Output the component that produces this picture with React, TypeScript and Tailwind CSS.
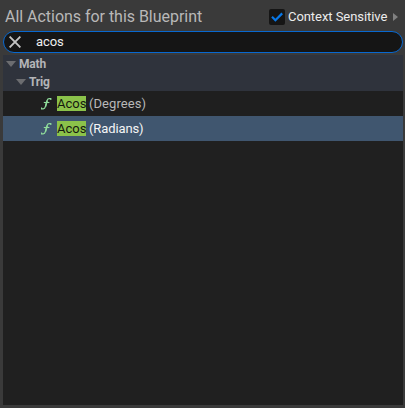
import React from "react";

function Caret() {
  return (
    <svg width="10" height="6" viewBox="0 0 10 6" className="shrink-0">
      <path d="M0 0H10L5 6Z" fill="#6c6d70" />
    </svg>
  );
}

function FunctionIcon() {
  return (
    <svg width="11" height="13" viewBox="0 0 11 13" fill="none" stroke="#8fdc9b" className="shrink-0">
      <path d="M9.8 2.9V1.6H8.3C7 1.6 6.5 2.2 6.1 3.5L4.4 9.6C4 11.2 3.3 11.8 2.2 11.8H.5V10.6" strokeWidth="1.2" />
      <path d="M6.2 3.6L4.5 9.6" strokeWidth="1.5" />
      <path d="M2.8 5.5H8.4" strokeWidth="1.1" />
    </svg>
  );
}

function Category({ label, indent }: { label: string; indent: string }) {
  return (
    <div className={`flex h-[18px] items-center gap-[3px] bg-[#2f333c] text-[12px] font-bold leading-[18px] tracking-[-0.2px] text-[#b4b5b8] ${indent}`}>
      <Caret />
      <span>{label}</span>
    </div>
  );
}

function Action({ match, rest, selected = false }: { match: string; rest: string; selected?: boolean }) {
  return (
    <div className={`flex h-[25px] items-center pl-[38px] text-[13px] ${selected ? "bg-[#40566f] text-[#f4f5f6]" : "bg-[#1f1f1f] text-[#b8b8b8]"}`}>
      <FunctionIcon />
      <span className="ml-[5px] h-[15px] w-[29px] bg-[#8bc24a] leading-[15px] text-[#14170f]">{match}</span>
      <span className={`ml-[3px] leading-[15px] ${selected ? "tracking-[-0.12px]" : "tracking-[0.06px]"}`}>{rest}</span>
    </div>
  );
}

export default function App() {
  return (
    <main className="flex h-[408px] w-[405px] flex-col overflow-hidden bg-[#3a3a3a] pr-[2px] pb-[3px] pl-[3px] font-['Roboto',sans-serif]">
      <header className="flex h-[31px] shrink-0 items-center pt-[2px] pl-[2px]">
        <h1 className="w-[264px] whitespace-nowrap text-[16px] leading-[20px] tracking-[-0.03px] text-[#b8b8b8]">All Actions for this Blueprint</h1>
        <div className="flex size-4 items-center justify-center rounded-[2px] bg-[#151515]">
          <svg width="12" height="10" viewBox="0 0 12 10" fill="none">
            <path d="M1 4.8L4.4 8.2L11.2 1.4" stroke="#0878e8" strokeWidth="2.2" />
          </svg>
        </div>
        <span className="ml-[3px] w-[102px] whitespace-nowrap text-[13px] tracking-[-0.06px] text-[#ececec]">Context Sensitive</span>
        <svg width="5" height="8" viewBox="0 0 5 8" className="ml-[3px]">
          <path d="M0 0L5 4L0 8Z" fill="#808080" />
        </svg>
      </header>
      <div className="flex h-[22px] shrink-0 items-center rounded-full border border-[#0868d0] bg-[#151515] pl-[5px]">
        <svg width="12" height="12" viewBox="0 0 12 12" fill="none">
          <path d="M.6 .6L11.4 11.4M11.4 .6L.6 11.4" stroke="#c4c4c4" strokeWidth="1.9" />
        </svg>
        <span className="ml-[15px] text-[13px] leading-[20px] tracking-[-0.1px] text-[#f0f0f0]">acos</span>
      </div>
      <section className="mt-[2px] flex-1 bg-[#202020]">
        <Category label="Math" indent="pl-[3px]" />
        <Category label="Trig" indent="pl-[13px]" />
        <Action match="Acos" rest="(Degrees)" />
        <Action match="Acos" rest="(Radians)" selected />
      </section>
    </main>
  );
}
